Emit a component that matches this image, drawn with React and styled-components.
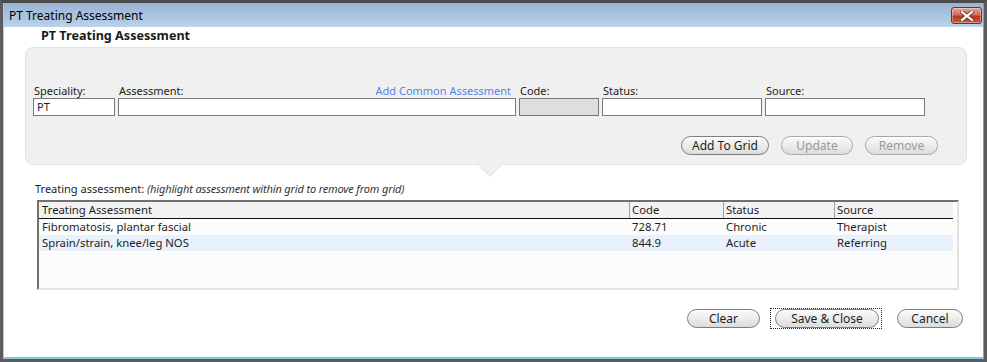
import React from "react";
import styled, { createGlobalStyle } from "styled-components";

const Global = createGlobalStyle`
  html, body { margin: 0; padding: 0; background: #ffffff; }
  body { font-family: "Noto Sans", "Open Sans", sans-serif; font-size: 11px; color: #1e1e1e; }
  * { box-sizing: border-box; }
`;

const Frame = styled.div`
  width: 987px;
  height: 362px;
  border: 3px solid #5c5c5c;
  border-top-color: #4a4a4a;
  display: flex;
  flex-direction: column;
  background: #ffffff;
`;

const Inner = styled.div`
  flex: 1;
  display: flex;
  flex-direction: column;
  border-left: 1px solid #a9c7e6;
  border-right: 1px solid #4fb3d9;
  border-bottom: 2px solid #7fc7e4;
`;

const TitleBar = styled.div`
  height: 24px;
  display: flex;
  align-items: center;
  justify-content: space-between;
  padding: 0 1px 0 5px;
  background: linear-gradient(#98b3d2, #bad2ea);
  font-size: 12px;
  color: #000;
`;

const CloseBtn = styled.div`
  width: 31px;
  height: 17px;
  margin-top: 1px;
  border: 1px solid #7e2a1f;
  border-radius: 3px;
  background: linear-gradient(#e3a596 0%, #d0705d 45%, #b8391f 55%, #c95a3c 100%);
  display: flex;
  align-items: center;
  justify-content: center;
  box-shadow: inset 0 0 0 1px rgba(255,255,255,0.35);
`;

const Body = styled.div`
  flex: 1;
  display: flex;
  flex-direction: column;
  padding: 0 16px 0 21px;
`;

const Heading = styled.div`
  height: 20px;
  padding-left: 16px;
  font-size: 12.6px;
  font-weight: bold;
  line-height: 18px;
  color: #1a1a1a;
`;

const Panel = styled.div`
  position: relative;
  height: 118px;
  background: #f0f0f0;
  border: 1px solid #e3e3e3;
  border-radius: 8px;
  padding: 35px 28px 0 7px;
  display: flex;
  flex-direction: column;
`;

const Pointer = styled.div`
  position: absolute;
  left: 455px;
  bottom: -9px;
  width: 18px;
  height: 18px;
  background: #f0f0f0;
  transform: rotate(45deg);
  border-right: 1px solid #e3e3e3;
  border-bottom: 1px solid #e3e3e3;
`;

const Fields = styled.div`
  display: grid;
  grid-template-columns: 82px 398px 80px 160px 160px;
  column-gap: 3px;
`;

const Field = styled.div`
  display: flex;
  flex-direction: column;
`;

const LabelRow = styled.div`
  height: 15px;
  display: flex;
  justify-content: space-between;
  align-items: flex-end;
  padding: 0 5px 0 1px;
  line-height: 14px;
  color: #222;
`;

const Link = styled.span`
  color: #5d7fe6;
`;

const Input = styled.div`
  height: 18px;
  border: 1px solid #7a7a7a;
  background: ${p => (p.$disabled ? "#dedede" : "#ffffff")};
  padding: 0 3px;
  line-height: 16px;
  font-size: 11px;
`;

const ButtonRow = styled.div`
  display: flex;
  justify-content: flex-end;
  gap: 12px;
  margin-top: 20px;
`;

const Pill = styled.button`
  height: 19px;
  width: ${p => p.$w}px;
  border-radius: 10px;
  border: 1px solid ${p => (p.$disabled ? "#a8a8a8" : "#7d7d7d")};
  background: linear-gradient(#fbfbfb 0%, #ececec 50%, #dcdcdc 100%);
  font-family: "Noto Sans", "Open Sans", sans-serif;
  font-size: 12px;
  line-height: 16px;
  padding: 0;
  color: ${p => (p.$disabled ? "#9a9a9a" : "#1e1e1e")};
  box-shadow: inset 0 1px 0 #ffffff;
`;

const HintLine = styled.div`
  margin-top: 17px;
  padding-left: 10px;
  height: 18px;
  line-height: 14px;
  color: #222;
`;

const Hint = styled.span`
  font-style: italic;
  color: #333;
  letter-spacing: -0.15px;
`;

const Grid = styled.div`
  margin-left: 12px;
  width: 922px;
  height: 90px;
  border-top: 2px solid #707070;
  border-left: 2px solid #707070;
  border-right: 2px solid #e2e2e2;
  border-bottom: 2px solid #e2e2e2;
  background: #fcfcfc;
  padding-right: 4px;
`;

const Row = styled.div`
  display: grid;
  grid-template-columns: 590px 94px 111px 119px;
  height: 16px;
  line-height: 15px;
  font-size: 11.3px;
  background: ${p => (p.$alt ? "#e9f1fc" : "transparent")};
`;

const HeadRow = styled(Row)`
  background: #f2f2f2;
  border-bottom: 1px solid #111;
  height: 17px;
  line-height: 16px;
`;

const Cell = styled.div`
  white-space: nowrap;
  overflow: hidden;
  border-left: ${p => (p.$sep ? "1px solid #a0a0a0" : "none")};
  padding-left: ${p => (p.$sep ? "2px" : "3px")};
`;

const Footer = styled.div`
  display: flex;
  justify-content: flex-end;
  align-items: center;
  gap: 10px;
  margin-top: 18px;
  padding-right: 4px;
`;

const Focus = styled.div`
  border: 1px dotted #222;
  padding: 0 2px 0 4px;
  margin: 0 5px 0 0;
  display: flex;
`;

const columns = ["Treating Assessment", "Code", "Status", "Source"];
const rows = [
  ["Fibromatosis, plantar fascial", "728.71", "Chronic", "Therapist"],
  ["Sprain/strain, knee/leg NOS", "844.9", "Acute", "Referring"],
];

export default function App() {
  return (
    <>
      <Global />
      <Frame>
        <Inner>
          <TitleBar>
            <span>PT Treating Assessment</span>
            <CloseBtn>
              <svg width="14" height="10" viewBox="0 0 14 10">
                <path d="M2 1 L12 9 M12 1 L2 9" stroke="#6b3a33" strokeWidth="4" strokeLinecap="square" />
                <path d="M2 1 L12 9 M12 1 L2 9" stroke="#ffffff" strokeWidth="2.2" strokeLinecap="square" />
              </svg>
            </CloseBtn>
          </TitleBar>
          <Body>
            <Heading>PT Treating Assessment</Heading>
            <Panel>
              <Fields>
                <Field>
                  <LabelRow>Speciality:</LabelRow>
                  <Input>PT</Input>
                </Field>
                <Field>
                  <LabelRow>
                    <span>Assessment:</span>
                    <Link>Add Common Assessment</Link>
                  </LabelRow>
                  <Input />
                </Field>
                <Field>
                  <LabelRow>Code:</LabelRow>
                  <Input $disabled />
                </Field>
                <Field>
                  <LabelRow>Status:</LabelRow>
                  <Input />
                </Field>
                <Field>
                  <LabelRow>Source:</LabelRow>
                  <Input />
                </Field>
              </Fields>
              <ButtonRow>
                <Pill $w={88}>Add To Grid</Pill>
                <Pill $w={72} $disabled>Update</Pill>
                <Pill $w={73} $disabled>Remove</Pill>
              </ButtonRow>
              <Pointer />
            </Panel>
            <HintLine>
              Treating assessment: <Hint>(highlight assessment within grid to remove from grid)</Hint>
            </HintLine>
            <Grid>
              <HeadRow>
                {columns.map((c, i) => (
                  <Cell key={c} $sep={i > 0}>{c}</Cell>
                ))}
              </HeadRow>
              {rows.map((r, ri) => (
                <Row key={ri} $alt={ri === 1}>
                  {r.map((v, i) => (
                    <Cell key={i}>{v}</Cell>
                  ))}
                </Row>
              ))}
            </Grid>
            <Footer>
              <Pill $w={73}>Clear</Pill>
              <Focus>
                <Pill $w={104}>Save &amp; Close</Pill>
              </Focus>
              <Pill $w={66}>Cancel</Pill>
            </Footer>
          </Body>
        </Inner>
      </Frame>
    </>
  );
}
